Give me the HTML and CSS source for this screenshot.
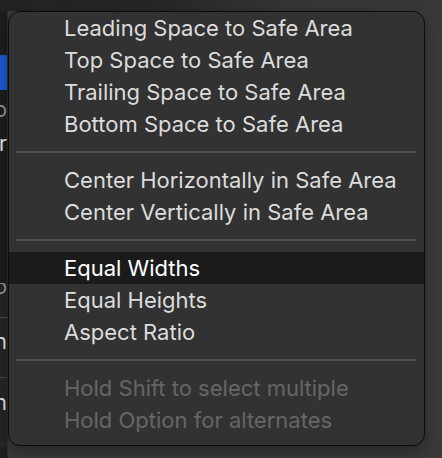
FILE: index.html
```html
<!DOCTYPE html>
<html>
<head>
<meta charset="utf-8">
<link rel="stylesheet" href="styles.css">
</head>
<body>
<div class="screen">
  <div class="topbar"></div>
  <div class="main">
    <div class="sidebar">
      <div class="sgap g1"></div>
      <div class="srow sel"></div>
      <div class="srow t1"><span class="dim">Info</span></div>
      <div class="srow t2"><span>Inspector</span></div>
      <div class="sgap g2"></div>
      <div class="srow t3"><span class="dim">Photo</span></div>
      <div class="sline"></div>
      <div class="srow t4"><span>Design</span></div>
      <div class="sline"></div>
      <div class="srow t5"><span>Button</span></div>
    </div>
    <div class="canvas"></div>
  </div>

  <div class="menu">
    <div class="item">Leading Space to Safe Area</div>
    <div class="item">Top Space to Safe Area</div>
    <div class="item">Trailing Space to Safe Area</div>
    <div class="item">Bottom Space to Safe Area</div>
    <div class="sep"></div>
    <div class="item">Center Horizontally in Safe Area</div>
    <div class="item">Center Vertically in Safe Area</div>
    <div class="sep"></div>
    <div class="item active">Equal Widths</div>
    <div class="item">Equal Heights</div>
    <div class="item">Aspect Ratio</div>
    <div class="sep"></div>
    <div class="item disabled">Hold Shift to select multiple</div>
    <div class="item disabled">Hold Option for alternates</div>
  </div>
</div>
</body>
</html>
```

FILE: styles.css
```css
html, body {
  margin: 0;
  padding: 0;
  background: #3a3a3a;
}
.screen {
  position: relative;
  width: 442px;
  height: 458px;
  overflow: hidden;
  font-family: Inter, "Liberation Sans", sans-serif;
}
.topbar {
  height: 11px;
  background: linear-gradient(to right, #232323 0px, #262626 150px, #363636 300px, #383838 442px);
}
.main {
  display: flex;
  height: 447px;
}
.sidebar {
  width: 7px;
  flex: none;
  background: #1e1e1e;
  border-right: 1px solid #2e2e2e;
  display: flex;
  flex-direction: column;
  overflow: hidden;
}
.canvas {
  flex: 1;
  background: #3a3a3a;
}
.sgap.g1 { height: 44px; }
.sgap.g2 { height: 129px; }
.srow {
  display: flex;
  justify-content: flex-end;
  align-items: flex-start;
  overflow: hidden;
  white-space: nowrap;
  font-size: 21px;
  line-height: 20px;
  color: #e6e6e6;
  box-sizing: border-box;
}
.srow .dim { color: #9a9a9a; }
.srow.sel { height: 35px; background: #1d5ad0; }
.srow.t1 { height: 24px; margin-top: 10px; }
.srow.t2 { height: 20px; margin-top: 10px; }
.srow.t3 { height: 34px; background: #262626; }
.srow.t3 span { margin-top: -6px; }
.srow.t4 { height: 59px; padding-top: 14px; background: #262626; }
.srow.t5 { height: 69px; padding-top: 15px; background: #262626; }
.sline { height: 1px; flex: none; background: #4a4a4a; }

.menu {
  position: absolute;
  left: 8px;
  top: 11px;
  width: 415px;
  padding: 0 0 9px 0;
  background: #323232;
  border: 1px solid #0c0c0c;
  border-radius: 12px;
  box-shadow: 0 6px 16px rgba(0,0,0,0.35);
}
.item {
  height: 32px;
  line-height: 32px;
  padding-left: 55px;
  font-size: 22px;
  color: #dcdcdc;
  white-space: nowrap;
}
.item.active {
  background: #1b1b1b;
  color: #ffffff;
}
.item.disabled {
  color: #666666;
}
.sep {
  height: 24px;
  display: flex;
  align-items: center;
  padding: 0 8px 0 7px;
}
.sep::before {
  content: "";
  flex: 1;
  height: 2px;
  background: #4e4e4e;
}
```
